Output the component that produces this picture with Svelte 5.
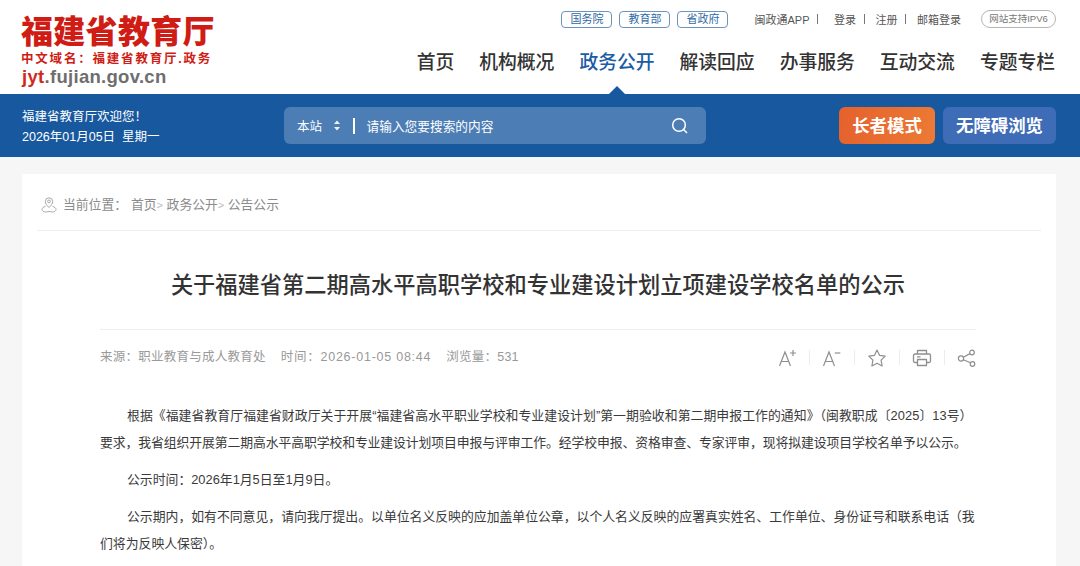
<script>
  const nav = ['首页', '机构概况', '政务公开', '解读回应', '办事服务', '互动交流', '专题专栏'];
  const sites = ['国务院', '教育部', '省政府'];
</script>

<header class="top">
  <div class="logo">
    <div class="logo-name">福建省教育厅</div>
    <div class="logo-domain">中文域名：福建省教育厅.政务</div>
    <div class="logo-url"><span>jyt</span>.fujian.gov.cn</div>
  </div>
  <div class="top-right">
    <div class="links">
      <div class="sites">
        {#each sites as s}
          <a class="site">{s}</a>
        {/each}
      </div>
      <div class="user">
        <a class="app">闽政通APP</a><i></i>
        <a class="login">登录</a><i></i>
        <a>注册</a><i></i>
        <a>邮箱登录</a>
      </div>
      <span class="ipv6">网站支持IPV6</span>
    </div>
    <nav>
      {#each nav as item}
        <a class:active={item === '政务公开'}>{item}</a>
      {/each}
    </nav>
  </div>
</header>

<section class="bar">
  <div class="greet">
    <div>福建省教育厅欢迎您！</div>
    <div>2026年01月05日&nbsp; 星期一</div>
  </div>
  <div class="search">
    <span class="scope">本站</span>
    <svg class="updown" width="8" height="11" viewBox="0 0 8 11"><path d="M4 0.5 7 4H1zM4 10.500 1 7h6z" fill="#fff" opacity=".9"/></svg>
    <span class="sep"></span>
    <span class="hint">请输入您要搜索的内容</span>
    <svg class="mag" width="17" height="17" viewBox="0 0 18 18" fill="none" stroke="#fff" stroke-width="1.600" stroke-linecap="round"><circle cx="8.500" cy="8.500" r="6.700"/><path d="M13.500 13.500 16.500 16.500"/></svg>
  </div>
  <div class="modes">
    <a class="elder">长者模式</a>
    <a class="access">无障碍浏览</a>
  </div>
</section>

<main class="card">
  <div class="crumb">
    <svg width="16" height="17" viewBox="0 0 16 17" fill="none" stroke="#a9a9a9" stroke-width="1"><path d="M8 11.500C5.800 9.300 4.300 7.600 4.300 5.500a3.700 3.700 0 0 1 7.400 0c0 2.100-1.500 3.800-3.700 6z"/><circle cx="8" cy="5.400" r="1.400"/><path d="M4.500 10.300C2.500 10.900 1 12 1 13.400c0 1.500 1.700 2.600 3.500 2.600 1.300 0 2.300-.5 3.500-.5s2.200.5 3.500.5c1.800 0 3.500-1.100 3.500-2.600 0-1.400-1.500-2.500-3.500-3.100"/></svg>
    <span class="here">当前位置：</span>
    <span class="path">首页<em>&gt;</em> 政务公开<em>&gt;</em> 公告公示</span>
  </div>

  <article>
    <h1>关于福建省第二期高水平高职学校和专业建设计划立项建设学校名单的公示</h1>
    <div class="meta">
      <div class="info">
        <span>来源：职业教育与成人教育处</span>
        <span class="when">时间：2026-01-05 08:44</span>
        <span>浏览量：531</span>
      </div>
      <div class="tools">
        <svg width="20" height="20" viewBox="0 0 20 20" fill="none" stroke="#8f8f8f" stroke-width="1.200"><path d="M2.500 18 8 4l5.500 14M4.300 13.500h7.400"/><path d="M16 2v6M13 5h6"/></svg>
        <i></i>
        <svg width="20" height="20" viewBox="0 0 20 20" fill="none" stroke="#8f8f8f" stroke-width="1.200"><path d="M1.500 18 7 4l5.500 14M3.300 13.500h7.400"/><path d="M12.800 5h5.500"/></svg>
        <i></i>
        <svg width="20" height="20" viewBox="0 0 20 20" fill="none" stroke="#8f8f8f" stroke-width="1.200" stroke-linejoin="round"><path d="M10 2l2.500 5.300 5.700.8-4.100 4.100 1 5.800-5.100-2.800-5.100 2.800 1-5.800L1.800 8.100l5.700-.8z"/></svg>
        <i></i>
        <svg width="20" height="20" viewBox="0 0 20 20" fill="none" stroke="#8f8f8f" stroke-width="1.300" stroke-linejoin="round"><path d="M5.500 6V2.500h9V6M5.500 14.500H3a1.500 1.500 0 0 1-1.500-1.500V7.500A1.500 1.500 0 0 1 3 6h14a1.500 1.500 0 0 1 1.500 1.500V13a1.500 1.500 0 0 1-1.500 1.500h-2.500"/><path d="M5.500 11.500h9v6h-9zM5 8.800h3.500"/></svg>
        <i></i>
        <svg width="20" height="20" viewBox="0 0 20 20" fill="none" stroke="#8f8f8f" stroke-width="1.200"><circle cx="4" cy="10.500" r="2.600"/><circle cx="15" cy="4.500" r="2.300"/><circle cx="15.500" cy="16" r="2.300"/><path d="M6.300 9.200 13 5.600M6.300 11.800l7.200 3"/></svg>
      </div>
    </div>
    <div class="body">
      <p class="lead">根据《福建省教育厅福建省财政厅关于开展“福建省高水平职业学校和专业建设计划”第一期验收和第二期申报工作的通知》（闽教职成〔2025〕13号）要求，我省组织开展第二期高水平高职学校和专业建设计划项目申报与评审工作。经学校申报、资格审查、专家评审，现将拟建设项目学校名单予以公示。</p>
      <p>公示时间：2026年1月5日至1月9日。</p>
      <p>公示期内，如有不同意见，请向我厅提出。以单位名义反映的应加盖单位公章，以个人名义反映的应署真实姓名、工作单位、身份证号和联系电话（我们将为反映人保密）。</p>
    </div>
  </article>
</main>

<style>
  :global(body) {
    margin: 0;
    height: 566px;
    overflow: hidden;
    background: #f6f6f6;
    font-family: "Liberation Sans", "Noto Sans CJK SC", sans-serif;
  }

  .top {
    height: 94px;
    box-sizing: border-box;
    background: #fff;
    display: flex;
    justify-content: space-between;
    padding: 0 24px 0 21px;
  }

  .logo {
    padding-top: 12px;
    color: #cf1c14;
  }

  .logo-name {
    font-size: 32px;
    line-height: 34px;
    font-weight: 900;
    letter-spacing: 0.3px;
    font-family: "Noto Sans CJK SC", sans-serif;
  }

  .logo-domain {
    font-size: 12.500px;
    line-height: 15px;
    font-weight: 700;
    letter-spacing: 1.800px;
    margin-top: 6px;
    white-space: nowrap;
  }

  .logo-url {
    font-size: 18.500px;
    line-height: 22px;
    font-weight: 700;
    letter-spacing: 0.300px;
    margin-top: -1px;
    margin-left: 1px;
    color: #6e6e6e;
  }

  .logo-url span {
    color: #cf2a20;
  }

  .top-right {
    display: flex;
    flex-direction: column;
    align-items: flex-end;
  }

  .links {
    display: flex;
    align-items: center;
    height: 18px;
    margin-top: 10px;
    font-size: 11px;
    color: #555;
    white-space: nowrap;
  }

  .sites {
    display: flex;
    gap: 7px;
    margin-right: 26px;
  }

  .site {
    width: 51px;
    height: 17px;
    box-sizing: border-box;
    border: 1px solid #6d94bd;
    border-radius: 4px;
    color: #2f6aa6;
    font-size: 11px;
    line-height: 15px;
    text-align: center;
  }

  .user {
    display: flex;
    align-items: center;
  }

  .user i {
    width: 1px;
    height: 10px;
    background: #777;
    margin: 0 11px 0 7.500px;
  }

  .user i:first-of-type {
    margin-right: 16px;
  }

  .ipv6 {
    width: 75px;
    height: 18px;
    box-sizing: border-box;
    margin-left: 20px;
    border: 1px solid #b5b5b5;
    border-radius: 9px;
    font-size: 9.500px;
    line-height: 16px;
    text-align: center;
    color: #777;
  }

  nav {
    display: flex;
    gap: 25px;
    margin-top: 21px;
    margin-right: 1px;
    font-size: 18.800px;
    line-height: 24px;
    font-weight: 500;
    font-family: "Noto Sans CJK SC", sans-serif;
    color: #333;
    white-space: nowrap;
  }

  nav a.active {
    position: relative;
    color: #1b5ca3;
  }

  nav a.active::after {
    content: "";
    position: absolute;
    left: 50%;
    top: 37px;
    margin-left: -8px;
    border: 8px solid transparent;
    border-top: 0;
    border-bottom-color: #17589f;
  }

  .bar {
    height: 63px;
    background: #17589f;
    display: flex;
    align-items: center;
    padding: 0 24px 0 22px;
    color: #fff;
  }

  .greet {
    width: 262px;
    padding-top: 2px;
    font-size: 12.500px;
    line-height: 20px;
  }

  .search {
    width: 422px;
    height: 37px;
    background: #4d7db5;
    border-radius: 6px;
    display: flex;
    align-items: center;
    padding: 0 13px;
    box-sizing: border-box;
    font-size: 12.500px;
  }

  .updown {
    margin-left: 11px;
  }

  .sep {
    width: 1.500px;
    height: 16px;
    background: #fff;
    margin: 0 12px;
  }

  .hint {
    flex: 1;
    font-size: 12.700px;
    margin-bottom: 1px;
  }

  .mag {
    margin-right: 5px;
  }

  .modes {
    margin-left: auto;
    display: flex;
    gap: 8px;
    font-size: 17.400px;
    font-weight: 700;
    font-family: "Noto Sans CJK SC", sans-serif;
  }

  .modes a {
    height: 37px;
    line-height: 36px;
    border-radius: 6px;
    text-align: center;
  }

  .elder {
    width: 96px;
    background: linear-gradient(100deg, #e5612c, #ec7a35);
  }

  .access {
    width: 113px;
    background: #3f6cb7;
  }

  .card {
    margin: 17px 24px 0 22px;
    background: #fff;
    padding: 0 15px;
    height: 400px;
    overflow: hidden;
  }

  .crumb {
    height: 57px;
    box-sizing: border-box;
    border-bottom: 1px solid #eeeeee;
    display: flex;
    align-items: center;
    padding: 2px 0 0 4px;
    font-size: 12.800px;
    color: #8b8b8b;
  }

  .crumb svg {
    margin-top: 2px;
  }

  .here {
    margin-left: 6px;
    width: 68px;
  }

  .path em {
    font-style: normal;
    color: #bbb;
    font-size: 11px;
  }

  article {
    padding: 0 65px 0 63px;
  }

  h1 {
    margin: 0;
    height: 99px;
    box-sizing: border-box;
    border-bottom: 1px solid #eeeeee;
    padding-top: 37px;
    text-align: center;
    font-size: 22.250px;
    line-height: 30px;
    font-weight: 500;
    font-family: "Noto Sans CJK SC", sans-serif;
    color: #333;
    white-space: nowrap;
  }

  .meta {
    height: 52px;
    display: flex;
    align-items: center;
    justify-content: space-between;
    font-size: 12.500px;
    color: #999;
  }

  .info {
    display: flex;
    gap: 15px;
    letter-spacing: 0.250px;
    margin-bottom: 2px;
  }

  .when {
    letter-spacing: 0.750px;
  }

  .tools {
    display: flex;
    align-items: center;
    gap: 12px;
    margin: 3px -1px 0 0;
  }

  .tools i {
    width: 1px;
    height: 15px;
    background: #ececec;
  }

  .body {
    margin-top: 20px;
    font-size: 12.850px;
    line-height: 27px;
    color: #3a3a3a;
  }

  .body p {
    margin: 0 0 10px;
    text-indent: 27px;
  }

  .body .lead {
    letter-spacing: -0.1px;
  }

  .body .lead::first-line {
    letter-spacing: 0.06px;
  }
</style>
